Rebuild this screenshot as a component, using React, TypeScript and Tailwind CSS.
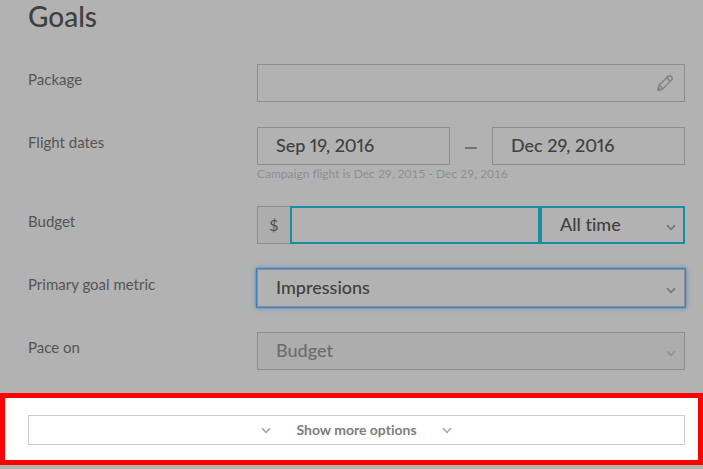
import { useId, useState } from 'react';
import type { ReactNode } from 'react';

const field =
  'h-[38px] w-full min-w-0 appearance-none rounded-none px-[18px] pb-0.5 text-lg font-medium outline-none';
const outlined = 'border border-[#8e8e8e] bg-transparent text-[#404040]';
const invalid = 'border-2 border-[#198da0] bg-transparent text-[#404040]';
const inactive = 'border border-[#8e8e8e] bg-[#adadad] text-[#6c6c6c] opacity-100';

function Chevron({ className }: { className: string }) {
  return (
    <svg className={className} width="10" height="7" viewBox="0 0 10 7" fill="none" stroke="currentColor" strokeWidth="1.7" aria-hidden="true">
      <path d="M1 1.2 5 5.4 9 1.2" />
    </svg>
  );
}

function Pencil({ className }: { className: string }) {
  return (
    <svg className={className} width="16" height="16" viewBox="0 0 16 16" fill="none" stroke="currentColor" strokeWidth="1.5" strokeLinejoin="round" aria-hidden="true">
      <path d="M.8 15.2 1.8 10.6 10.8 1.6Q12.6 0 14.4 1.6Q16 3.4 14.4 5.2L5.4 14.2Z" />
      <path d="M10.2 2.4Q10.8 5.2 13.6 5.8M1.8 10.6Q4.6 11.2 5.4 14.2" />
      <path d="M.8 15.2 1.3 13Q2.6 13.3 3 14.7Z" fill="currentColor" />
    </svg>
  );
}

function Row({ label, htmlFor, children }: { label: string; htmlFor: string; children: ReactNode }) {
  return (
    <div className="flex items-start">
      <label htmlFor={htmlFor} className="w-[229px] shrink-0 pt-[5px] text-[15px] leading-5 text-[#555555]">
        {label}
      </label>
      <div className="min-w-0 flex-1">{children}</div>
    </div>
  );
}

type SelectProps = { id: string; options: string[]; look: string; label?: string; disabled?: boolean };

function Select({ id, options, look, label, disabled }: SelectProps) {
  return (
    <div className="relative">
      <select id={id} aria-label={label} disabled={disabled} className={`${field} ${look}`}>
        {options.map((o) => (
          <option key={o}>{o}</option>
        ))}
      </select>
      <Chevron className={`pointer-events-none absolute top-[18px] right-[9px] ${disabled ? 'text-[#929292]' : 'text-[#7a7a7a]'}`} />
    </div>
  );
}

export default function App() {
  const id = useId();
  const [open, setOpen] = useState(false);
  return (
    <main className="min-h-screen bg-[#b2b2b2] font-['Lato','Open_Sans',sans-serif] [font-variant-ligatures:none]">
      <form className="flex flex-col gap-[25px] pr-[18px] pb-[23px] pl-7" onSubmit={(e) => e.preventDefault()}>
        <h1 className="h-[39px] text-[28px] leading-[33px] font-medium text-[#404040]">Goals</h1>
        <Row label="Package" htmlFor={`${id}package`}>
          <div className="relative">
            <input id={`${id}package`} className={`${field} ${outlined}`} />
            <Pencil className="pointer-events-none absolute top-[11px] right-3 text-[#858585]" />
          </div>
        </Row>
        <Row label="Flight dates" htmlFor={`${id}start`}>
          <div className="flex items-center">
            <input id={`${id}start`} defaultValue="Sep 19, 2016" className={`${field} ${outlined} proportional-nums`} />
            <span className="flex w-[42px] shrink-0 justify-center pt-1">
              <span className="h-0.5 w-3 bg-[#747474]" />
            </span>
            <input aria-label="Flight end date" defaultValue="Dec 29, 2016" className={`${field} ${outlined} proportional-nums`} />
          </div>
          <p className="h-4 pt-px text-xs leading-4 text-[#8f8f8f]">Campaign flight is Dec 29, 2015 - Dec 29, 2016</p>
        </Row>
        <Row label="Budget" htmlFor={`${id}budget`}>
          <div className="flex">
            <span className="flex w-[33px] shrink-0 items-center justify-center border border-r-0 border-[#8e8e8e] bg-[#adadad] text-base text-[#505050]">$</span>
            <input id={`${id}budget`} className={`${field} ${invalid} flex-1`} />
            <div className="w-[145px] shrink-0">
              <Select id={`${id}period`} label="Budget period" options={['All time', 'Daily']} look={`${invalid} [font-variant-ligatures:none]`} />
            </div>
          </div>
        </Row>
        <Row label="Primary goal metric" htmlFor={`${id}metric`}>
          <Select id={`${id}metric`} options={['Impressions', 'Clicks']} look={`${outlined} shadow-[0_0_1px_1px_#4280c4,0_0_5px_1px_#5b8fcb]`} />
        </Row>
        <Row label="Pace on" htmlFor={`${id}pace`}>
          <Select id={`${id}pace`} options={['Budget', 'Impressions']} disabled look={inactive} />
        </Row>
      </form>
      <section className="border-[5px] border-[#ff0000] bg-white pt-[17px] pr-[13px] pb-[15px] pl-[23px]">
        <button
          type="button"
          aria-expanded={open}
          onClick={() => setOpen(!open)}
          className="flex h-[30px] w-full items-center justify-center gap-[25px] border border-[#cccccc] text-sm font-bold text-[#7d7d7d] [font-variant-ligatures:none]"
        >
          <Chevron className="text-[#b0b0b0]" />
          Show more options
          <Chevron className="text-[#b0b0b0]" />
        </button>
      </section>
    </main>
  );
}
